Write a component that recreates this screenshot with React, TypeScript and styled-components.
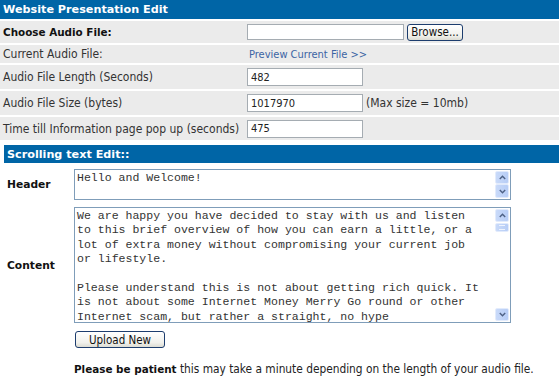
import React from "react"
import styled, { createGlobalStyle } from "styled-components"

const GlobalStyle = createGlobalStyle`
  html, body {
    margin: 0;
    padding: 0;
    background: #ffffff;
  }
  body {
    font-family: "DejaVu Sans Condensed", "DejaVu Sans", sans-serif;
    font-size: 12px;
    color: #333333;
  }
  b {
    font-family: "DejaVu Sans", sans-serif;
    font-size: 10.4px;
    color: #111111;
  }
`

const Page = styled.div`
  width: 559px;
  display: flex;
  flex-direction: column;
`

const TitleBar = styled.div<{ $short?: boolean }>`
  height: ${p => (p.$short ? 18 : 19)}px;
  background-color: #0065a6;
  color: #ffffff;
  font-family: "DejaVu Sans", sans-serif;
  font-weight: bold;
  font-size: 11.2px;
  display: flex;
  align-items: center;
  padding-left: 3px;
`

const FieldList = styled.div`
  display: flex;
  flex-direction: column;
  gap: 2px;
  padding-top: 2px;
  background: #ffffff;
`

const FieldRow = styled.div<{ $height: number }>`
  height: ${p => p.$height}px;
  display: grid;
  grid-template-columns: 246px 1fr;
  align-items: center;
  background-color: #ebebeb;
`

const FieldLabel = styled.div<{ $strong?: boolean }>`
  padding-left: 3px;
  font-family: ${p => (p.$strong ? `"DejaVu Sans", sans-serif` : "inherit")};
  font-weight: ${p => (p.$strong ? "bold" : "normal")};
  font-size: ${p => (p.$strong ? "10.4px" : "12px")};
  color: ${p => (p.$strong ? "#111111" : "#333333")};
  white-space: nowrap;
`

const FieldValue = styled.div`
  display: flex;
  align-items: center;
  gap: 3px;
  padding-left: 1px;
`

const TextInput = styled.input<{ $width: number; $height?: number }>`
  box-sizing: border-box;
  width: ${p => p.$width}px;
  height: ${p => p.$height || 18}px;
  border: 1px solid #a5acb2;
  background: #ffffff;
  font-family: inherit;
  font-size: 11px;
  color: #222222;
  padding: 0 3px;
  outline: none;
`

const XpButton = styled.button<{ $width: number }>`
  box-sizing: border-box;
  width: ${p => p.$width}px;
  height: 17px;
  border: 1px solid #1d3d6e;
  border-radius: 3px;
  background: linear-gradient(#ffffff, #f1f1ec 70%, #dcdcd3);
  font-family: "DejaVu Sans Condensed", "DejaVu Sans", sans-serif;
  font-size: 11.5px;
  color: #111111;
  padding: 0;
  display: flex;
  align-items: center;
  justify-content: center;
`

const PreviewLink = styled.a`
  color: #3b64a4;
  font-size: 11px;
  text-decoration: none;
  padding-left: 2px;
`

const Note = styled.span`
  color: #333333;
`

const Spacer = styled.div<{ $h: number }>`
  height: ${p => p.$h}px;
`

const EditSection = styled.div`
  margin-left: 4px;
  display: flex;
  flex-direction: column;
`

const EditRow = styled.div<{ $top: number }>`
  display: grid;
  grid-template-columns: 70px 437px;
  align-items: center;
  margin-top: ${p => p.$top}px;
`

const EditLabel = styled.div`
  padding-left: 3px;
  font-family: "DejaVu Sans", sans-serif;
  font-weight: bold;
  font-size: 10.7px;
  color: #111111;
`

const TextBox = styled.div<{ $height: number }>`
  box-sizing: border-box;
  height: ${p => p.$height}px;
  border: 1px solid #7f9db9;
  background: #ffffff;
  display: flex;
`

const TextArea = styled.textarea`
  flex: 1;
  border: none;
  outline: none;
  resize: none;
  overflow: hidden;
  white-space: pre;
  font-family: "Liberation Mono", "Courier New", monospace;
  font-size: 11.55px;
  line-height: 14.4px;
  color: #333333;
  padding: 1px 2px;
  margin: 0;
  background: transparent;
`

const ScrollBar = styled.div`
  width: 14px;
  display: flex;
  flex-direction: column;
  justify-content: space-between;
  padding: 1px 1px 1px 0;
`

const ScrollButton = styled.div<{ $h?: number }>`
  height: ${p => p.$h || 13}px;
  background: linear-gradient(90deg, #c9daf9, #b7cdf6);
  border: 1px solid #e2ebfc;
  border-radius: 2px;
  box-sizing: border-box;
  display: flex;
  align-items: center;
  justify-content: center;
`

const ScrollTrack = styled.div`
  flex: 1;
  display: flex;
  flex-direction: column;
  padding-top: 1px;
`

const ScrollThumb = styled.div`
  height: 9px;
  background: linear-gradient(90deg, #c9daf9, #b7cdf6);
  border: 1px solid #e2ebfc;
  border-radius: 2px;
  box-sizing: border-box;
  display: flex;
  align-items: center;
  justify-content: center;
  &::after {
    content: "";
    width: 6px;
    height: 3px;
    border-top: 1px solid #eef3fd;
    border-bottom: 1px solid #eef3fd;
  }
`

const ButtonRow = styled.div`
  margin-top: 8px;
  padding-left: 71px;
`

const Patience = styled.p`
  margin: 14px 0 0 0;
  padding-left: 70px;
  font-size: 11.8px;
  color: #222222;
  white-space: nowrap;
`

const Chevron = ({ down }: { down?: boolean }) => (
  <svg width="7" height="5" viewBox="0 0 7 5">
    <path
      d={down ? "M0.8 1 L3.5 3.8 L6.2 1" : "M0.8 4 L3.5 1.2 L6.2 4"}
      fill="none"
      stroke="#4d6185"
      strokeWidth="1.4"
    />
  </svg>
)

const headerText = "Hello and Welcome!"

const contentText = [
  "We are happy you have decided to stay with us and listen",
  "to this brief overview of how you can earn a little, or a",
  "lot of extra money without compromising your current job",
  "or lifestyle.",
  "",
  "Please understand this is not about getting rich quick. It",
  "is not about some Internet Money Merry Go round or other",
  "Internet scam, but rather a straight, no hype",
].join("\n")

export default function App() {
  return (
    <Page>
      <GlobalStyle />
      <TitleBar>Website Presentation Edit</TitleBar>
      <FieldList>
        <FieldRow $height={22}>
          <FieldLabel $strong>Choose Audio File:</FieldLabel>
          <FieldValue>
            <TextInput $width={157} $height={16} readOnly />
            <XpButton $width={56}>Browse...</XpButton>
          </FieldValue>
        </FieldRow>
        <FieldRow $height={18}>
          <FieldLabel>Current Audio File:</FieldLabel>
          <FieldValue>
            <PreviewLink href="#">Preview Current File &gt;&gt;</PreviewLink>
          </FieldValue>
        </FieldRow>
        <FieldRow $height={24}>
          <FieldLabel>Audio File Length (Seconds)</FieldLabel>
          <FieldValue>
            <TextInput $width={116} defaultValue="482" />
          </FieldValue>
        </FieldRow>
        <FieldRow $height={24}>
          <FieldLabel>Audio File Size (bytes)</FieldLabel>
          <FieldValue>
            <TextInput $width={116} defaultValue="1017970" />
            <Note>(Max size = 10mb)</Note>
          </FieldValue>
        </FieldRow>
        <FieldRow $height={23}>
          <FieldLabel>Time till Information page pop up (seconds)</FieldLabel>
          <FieldValue>
            <TextInput $width={116} defaultValue="475" />
          </FieldValue>
        </FieldRow>
      </FieldList>
      <Spacer $h={5} />
      <EditSection>
        <TitleBar $short>Scrolling text Edit::</TitleBar>
        <EditRow $top={6}>
          <EditLabel>Header</EditLabel>
          <TextBox $height={31}>
            <TextArea defaultValue={headerText} />
            <ScrollBar>
              <ScrollButton $h={13}>
                <Chevron />
              </ScrollButton>
              <ScrollButton $h={14}>
                <Chevron down />
              </ScrollButton>
            </ScrollBar>
          </TextBox>
        </EditRow>
        <EditRow $top={7}>
          <EditLabel>Content</EditLabel>
          <TextBox $height={116}>
            <TextArea defaultValue={contentText} />
            <ScrollBar>
              <ScrollButton>
                <Chevron />
              </ScrollButton>
              <ScrollTrack>
                <ScrollThumb />
              </ScrollTrack>
              <ScrollButton>
                <Chevron down />
              </ScrollButton>
            </ScrollBar>
          </TextBox>
        </EditRow>
        <ButtonRow>
          <XpButton $width={90}>Upload New</XpButton>
        </ButtonRow>
        <Patience>
          <b>Please be patient</b> this may take a minute depending on the length of your audio file.
        </Patience>
      </EditSection>
    </Page>
  )
}
